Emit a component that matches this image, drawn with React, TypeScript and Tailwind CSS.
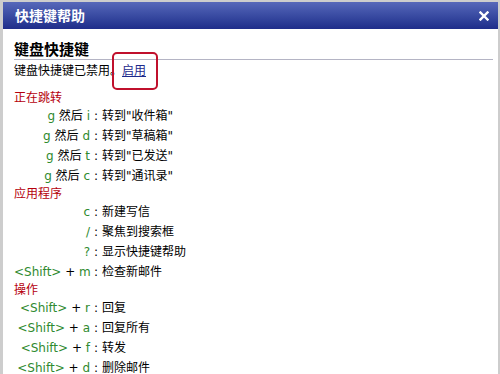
import React from "react";

type Row = { keys: React.ReactNode; desc: string };

const G = ({ children }: { children: React.ReactNode }) => (
  <span className="text-[#2f8a2f]">{children}</span>
);

const sections: { title: string; rows: Row[] }[] = [
  {
    title: "正在跳转",
    rows: [
      { keys: <><G>g</G> 然后 <G>i</G></>, desc: "转到\"收件箱\"" },
      { keys: <><G>g</G> 然后 <G>d</G></>, desc: "转到\"草稿箱\"" },
      { keys: <><G>g</G> 然后 <G>t</G></>, desc: "转到\"已发送\"" },
      { keys: <><G>g</G> 然后 <G>c</G></>, desc: "转到\"通讯录\"" },
    ],
  },
  {
    title: "应用程序",
    rows: [
      { keys: <G>c</G>, desc: "新建写信" },
      { keys: <G>/</G>, desc: "聚焦到搜索框" },
      { keys: <G>?</G>, desc: "显示快捷键帮助" },
      { keys: <><G>&lt;Shift&gt;</G> + <G>m</G></>, desc: "检查新邮件" },
    ],
  },
  {
    title: "操作",
    rows: [
      { keys: <><G>&lt;Shift&gt;</G> + <G>r</G></>, desc: "回复" },
      { keys: <><G>&lt;Shift&gt;</G> + <G>a</G></>, desc: "回复所有" },
      { keys: <><G>&lt;Shift&gt;</G> + <G>f</G></>, desc: "转发" },
      { keys: <><G>&lt;Shift&gt;</G> + <G>d</G></>, desc: "删除邮件" },
    ],
  },
];

const font = "font-['DejaVu_Sans','Noto_Sans_CJK_SC',sans-serif]";

export default function App() {
  return (
    <div className={`h-[374px] w-[500px] overflow-hidden bg-white border-t-2 border-l-[3px] border-r-2 border-[#cdcdcd] ${font}`}>
      <div className="flex h-[27px] items-center justify-between bg-gradient-to-b from-[#5768ba] to-[#1f2d8a] pl-[12px] pr-[9px]">
        <span className="text-[14px] font-bold text-white font-['Noto_Sans_CJK_SC',sans-serif]">快捷键帮助</span>
        <svg width="10" height="10" viewBox="0 0 10 10">
          <path d="M1.5 1.5 L8.5 8.5 M8.5 1.5 L1.5 8.5" stroke="white" strokeWidth="2.4" strokeLinecap="square" />
        </svg>
      </div>

      <div className="pl-[11px] pr-[5px] pt-[10px]">
        <div className="border-b border-[#b4b4c4] pb-[1px] text-[15px] font-bold leading-[19px] text-black font-['Noto_Sans_CJK_SC',sans-serif]">
          键盘快捷键
        </div>
        <div className="mt-[3px] text-[12px] leading-[16px] text-black">
          键盘快捷键已禁用。
          <span className="relative">
            <a href="#" className="text-[#1d2a8c] underline">启用</a>
            <span className="absolute -left-[10px] -right-[12px] -top-[12px] -bottom-[12px] rounded-[5px] border-2 border-[#c0102c]" />
          </span>
        </div>

        <div className="mt-[11px]">
          {sections.map((s) => (
            <div key={s.title}>
              <div className="h-[16px] text-[12px] leading-[16px] text-[#b5000c]">{s.title}</div>
              {s.rows.map((r, i) => (
                <div key={i} className="flex h-[20px] items-center text-[12px] leading-[20px] text-black">
                  <span className="w-[76px] whitespace-pre text-right">{r.keys}</span>
                  <span className="w-[12px] text-center">:</span>
                  <span>{r.desc}</span>
                </div>
              ))}
            </div>
          ))}
        </div>
      </div>
    </div>
  );
}
